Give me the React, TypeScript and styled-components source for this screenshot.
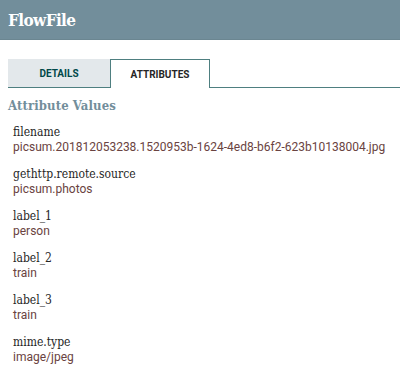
import React, { useState } from 'react'
import styled, { createGlobalStyle } from 'styled-components'

const GlobalStyle = createGlobalStyle`
    html, body {
        margin: 0;
        padding: 0;
        background: #ffffff;
    }
    body {
        font-family: Roboto, "Liberation Sans", sans-serif;
    }
`

const Header = styled.div`
    height: 40px;
    background-color: #728e9b;
    border-bottom: 1px solid #6b8691;
    display: flex;
    align-items: center;
    padding: 0 8px;
    box-sizing: border-box;
`

const Title = styled.h1`
    margin: 0;
    font-family: "DejaVu Serif Condensed", "DejaVu Serif", serif;
    font-stretch: condensed;
    font-size: 17px;
    letter-spacing: -0.6px;
    font-weight: 700;
    color: #ffffff;
`

const TabBar = styled.div`
    display: flex;
    margin-top: 19px;
    padding-left: 8px;
`

const Tab = styled.div<{ active?: boolean }>`
    width: ${(props) => (props.active ? '100px' : '102px')};
    height: 29px;
    box-sizing: border-box;
    display: flex;
    align-items: center;
    justify-content: center;
    font-size: 10px;
    font-weight: 700;
    cursor: pointer;
    color: ${(props) => (props.active ? '#262626' : '#004849')};
    background-color: ${(props) => (props.active ? '#ffffff' : '#e3e8eb')};
    border: ${(props) => (props.active ? '1px solid #4e7f80' : 'none')};
    border-bottom: ${(props) => (props.active ? 'none' : '1px solid #4e7f80')};
`

const TabFill = styled.div`
    flex: 1;
    border-bottom: 1px solid #4e7f80;
`

const Content = styled.div`
    padding: 8px 8px 0 8px;
`

const SectionTitle = styled.h2`
    margin: 0 0 10px 0;
    font-family: "DejaVu Serif Condensed", "DejaVu Serif", serif;
    font-stretch: condensed;
    font-size: 13px;
    letter-spacing: 0.1px;
    line-height: 19px;
    font-weight: 700;
    color: #728e9b;
`

const AttrList = styled.div`
    display: flex;
    flex-direction: column;
    gap: 13px;
    padding-left: 5px;
`

const Attr = styled.div`
    display: flex;
    flex-direction: column;
`

const AttrName = styled.div`
    font-family: "DejaVu Serif Condensed", "DejaVu Serif", serif;
    font-stretch: condensed;
    font-size: 12px;
    line-height: 15px;
    color: #262626;
`

const AttrValue = styled.div`
    font-family: Roboto, sans-serif;
    font-size: 12px;
    line-height: 14px;
    color: #6a4341;
    white-space: nowrap;
`

const attributes = [
    { name: 'filename', value: 'picsum.201812053238.1520953b-1624-4ed8-b6f2-623b10138004.jpg' },
    { name: 'gethttp.remote.source', value: 'picsum.photos' },
    { name: 'label_1', value: 'person' },
    { name: 'label_2', value: 'train' },
    { name: 'label_3', value: 'train' },
    { name: 'mime.type', value: 'image/jpeg' },
]

function App() {
    const [tab, setTab] = useState('attributes')

    return (
        <>
            <GlobalStyle />
            <Header>
                <Title>FlowFile</Title>
            </Header>
            <TabBar>
                <Tab active={tab === 'details'} onClick={() => setTab('details')}>DETAILS</Tab>
                <Tab active={tab === 'attributes'} onClick={() => setTab('attributes')}>ATTRIBUTES</Tab>
                <TabFill />
            </TabBar>
            <Content>
                <SectionTitle>Attribute Values</SectionTitle>
                <AttrList>
                    {attributes.map((a) => (
                        <Attr key={a.name}>
                            <AttrName>{a.name}</AttrName>
                            <AttrValue>{a.value}</AttrValue>
                        </Attr>
                    ))}
                </AttrList>
            </Content>
        </>
    )
}

export default App
